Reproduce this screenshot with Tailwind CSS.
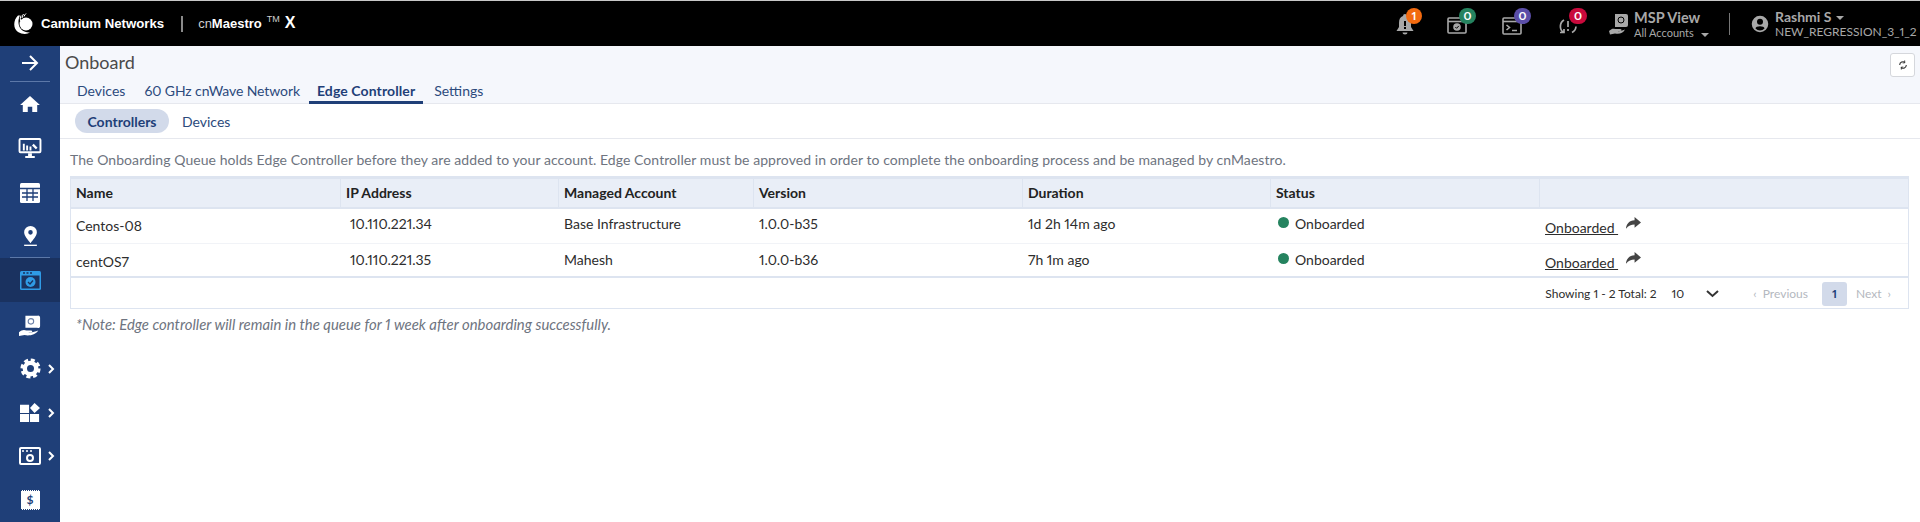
<!DOCTYPE html>
<html lang="en">
<head>
<meta charset="UTF-8" />
<title>Onboard</title>
<script src="https://cdn.jsdelivr.net/npm/@tailwindcss/browser@4"></script>
</head>
<body class="bg-white font-['Lato','Liberation_Sans',sans-serif] proportional-nums text-[#2d2d2d] h-[522px] w-[1920px] overflow-hidden">
  <!-- Top bar -->
  <header class="h-[46px] bg-black border-t border-t-[#c8c8c8] flex items-center text-white">
    <svg class="ml-[12px] w-[22px] h-[22px]" viewBox="0 0 22 22" fill="none" stroke="#fff">
      <circle cx="14" cy="11" r="6.500" fill="#fff" stroke="none" />
      <path d="M6 2.500C1 7 1 16 6 19c4 2.500 9 2.500 12 .5C12 20 7 16 6.500 10 6.300 7 7 4.500 8 2.500z" fill="#fff" stroke="none" />
      <path d="M9 2.500 A9 9 0 0 0 8.500 8 M11.500 1 A9 9 0 0 0 10 5 M14 0.500 A8 8 0 0 0 12 3.500" stroke-width="1" />
    </svg>
    <span class="ml-[7px] text-[13.200px] font-bold font-['Liberation_Sans',sans-serif]">Cambium Networks</span>
    <span class="ml-[17px] w-[2px] h-[16px] bg-[#8a8a8a]"></span>
    <span class="ml-[15px] text-[13px] font-['Liberation_Sans',sans-serif] flex items-start"><span class="text-[#d0d0d0]">cn</span><b>Maestro</b><span class="text-[9px] ml-[5px] -mt-[1px] text-[#d0d0d0]">TM</span><b class="text-[16px] ml-[5px] leading-[18px]">X</b></span>

    <div class="ml-auto flex items-center text-[#a8a8a8]">
      <div class="relative w-[20px] h-[24px]">
        <svg class="w-[20px] h-[24px]" viewBox="0 0 20 24" fill="#a8a8a8"><path d="M10 2a2 2 0 0 1 2 2c3 1 4 3.500 4 7v4l2.500 4h-17L4 15v-4c0-3.500 1-6 4-7a2 2 0 0 1 2-2z" /><path d="M7.500 20.500h5a2.500 2 0 0 1-5 0z" /><path d="M9 9h2v5H9zM9 15h2v2H9z" fill="#000" /></svg>
        <span class="absolute -top-[4px] left-[11px] w-[16px] h-[16px] rounded-full bg-[#f26a0f] text-white text-[12px] font-bold flex items-center justify-center">1</span>
      </div>
      <div class="relative ml-[32px] w-[20px] h-[24px]">
        <svg class="w-[20px] h-[24px]" viewBox="0 0 20 24" fill="none" stroke="#a8a8a8" stroke-width="1.600"><rect x="1" y="6" width="18" height="15" rx="1" /><path d="M1 9.500h18" /><circle cx="10" cy="15" r="3.800" fill="#a8a8a8" stroke="none" /><path d="M8.300 15l1.300 1.300 2.200-2.400" stroke="#000" stroke-width="1" /></svg>
        <span class="absolute -top-[4px] left-[12px] w-[17px] h-[16px] rounded-full bg-[#25835f] text-white text-[12px] font-bold flex items-center justify-center">0</span>
      </div>
      <div class="relative ml-[35px] w-[20px] h-[24px]">
        <svg class="w-[20px] h-[24px]" viewBox="0 0 20 24" fill="none" stroke="#a8a8a8" stroke-width="1.600"><rect x="1" y="6" width="18" height="16" rx="1" /><path d="M1 9.500h18" /><path d="M4.500 13l3 2.500-3 2.500M10 18.500h5" /></svg>
        <span class="absolute -top-[4px] left-[12px] w-[17px] h-[16px] rounded-full bg-[#5b4ea8] text-white text-[12px] font-bold flex items-center justify-center">0</span>
      </div>
      <div class="relative ml-[36px] w-[20px] h-[24px]">
        <svg class="w-[20px] h-[24px]" viewBox="0 0 20 24" fill="none" stroke="#a8a8a8" stroke-width="1.700"><path d="M5.500 20.500A7.500 7.500 0 0 1 6 8M2 20.500h4v-3.500M14 20.500a7.500 7.500 0 0 0 4-6" /><path d="M10 9v6M10 17v2" /></svg>
        <span class="absolute -top-[4px] left-[11px] w-[18px] h-[16px] rounded-full bg-[#c90a3c] text-white text-[12px] font-bold flex items-center justify-center">0</span>
      </div>
      <svg class="ml-[31px] w-[20px] h-[22px]" viewBox="0 0 20 22" fill="#a8a8a8"><path d="M6 1h11a2 2 0 0 1 2 2v9a2 2 0 0 1-2 2H6z" /><circle cx="12" cy="7" r="3" fill="none" stroke="#000" /><path d="M0 18c3-2.500 4-2.500 6-2h5c2 0 2 2 0 2H8c3 .5 6-.5 8-1.500-2 4-6 5-10 4l-5 1z" /></svg>
      <div class="ml-[5px] w-[95px] flex flex-col">
        <span class="text-[14.500px] font-bold leading-[17px]">MSP View</span>
        <span class="text-[11px] leading-[13px] whitespace-nowrap">All Accounts <span class="inline-block ml-[4px] w-0 h-0 border-x-[4px] border-x-transparent border-t-[4px] border-t-[#a8a8a8]"></span></span>
      </div>
      <span class="w-px h-[22px] bg-[#777]"></span>
      <svg class="ml-[21px] w-[18px] h-[18px]" viewBox="0 0 24 24" fill="#a8a8a8"><path fill-rule="evenodd" d="M12 1a11 11 0 1 1 0 22 11 11 0 0 1 0-22zm0 4a4 4 0 1 0 0 8 4 4 0 0 0 0-8zm0 10c-3 0-6 1-6 3a8 8 0 0 0 12 0c0-2-3-3-6-3z" /></svg>
      <div class="ml-[6px] w-[145px] flex flex-col">
        <span class="text-[14px] font-bold leading-[16px]">Rashmi S <span class="inline-block ml-[1px] mb-[2px] w-0 h-0 border-x-[4px] border-x-transparent border-t-[4px] border-t-[#a8a8a8]"></span></span>
        <span class="text-[12px] leading-[14px]">NEW_REGRESSION_3_1_2</span>
      </div>
    </div>
  </header>

  <div class="flex h-[476px]">
    <!-- Sidebar -->
    <nav class="w-[60px] shrink-0 bg-[#1f3f78] flex flex-col items-center text-white">
      <div class="h-[36px] w-full flex flex-col items-center justify-between pt-[7px]">
        <svg class="w-[20px] h-[20px]" viewBox="0 0 20 20" fill="none" stroke="#fff" stroke-width="2"><path d="M2 10h15M10 3l7 7-7 7" /></svg>
        <span class="w-[40px] h-px bg-[#5c78a8]"></span>
      </div>
      <div class="h-[44px] flex items-center">
        <svg class="w-[20px] h-[18px]" viewBox="0 0 22 20" fill="#fff"><path d="M11 1 L22 11h-3v8h-5.500v-6h-5v6H3v-8H0z" /></svg>
      </div>
      <div class="h-[46px] flex items-center">
        <svg class="w-[24px] h-[20px]" viewBox="0 0 24 21"><rect x="1" y="1" width="22" height="14" rx="1" fill="none" stroke="#fff" stroke-width="2" /><path d="M4.500 13V6h2v7zM8 13V8h2v5zM11.500 13V9h2v4z" fill="#fff" /><path d="M15 7l4 4" stroke="#fff" stroke-width="2.500" /><path d="M10 16h4v3h-4zM7 19h10v2H7z" fill="#fff" /></svg>
      </div>
      <div class="h-[43px] flex items-center">
        <svg class="w-[20px] h-[20px]" viewBox="0 0 20 20"><rect width="20" height="20" rx="1.500" fill="#fff" /><path d="M0 5.500h20M2 10h16M2 14h16M7 6v12M13 6v12" stroke="#1f3f78" stroke-width="1.300" /></svg>
      </div>
      <div class="h-[43px] flex items-center pt-[2px]">
        <svg class="w-[15px] h-[20px]" viewBox="0 0 16 22" fill="#fff"><path fill-rule="evenodd" d="M8 0a7 7 0 0 1 7 7c0 4-4 8-7 12C5 15 1 11 1 7a7 7 0 0 1 7-7zm0 4.500a2.500 2.500 0 1 0 0 5 2.500 2.500 0 0 0 0-5z" /><path d="M1 20.500h14V22H1z" /></svg>
      </div>
      <span class="w-[40px] h-px bg-[#5c78a8]"></span>
      <div class="h-[45px] w-full bg-[#1a3260] flex items-center justify-center">
        <svg class="w-[21px] h-[19px]" viewBox="0 0 21 19"><rect width="21" height="19" rx="1.500" fill="#2f9be6" /><rect x="1.500" y="4.500" width="18" height="13" fill="#1a3260" /><path d="M3 2h2M6.500 2h2M10 2h2" stroke="#1a3260" stroke-width="1.500" /><circle cx="10.500" cy="11" r="5" fill="#2f9be6" /><path d="M8 11l2 2 3-3.500" fill="none" stroke="#1a3260" stroke-width="1.300" /></svg>
      </div>
      <div class="h-[45px] flex items-center">
        <svg class="w-[24px] h-[22px]" viewBox="0 0 24 24" fill="#fff"><path d="M7 2h13a2 2 0 0 1 3 2v9a2 2 0 0 1-3 2H7z" /><circle cx="13" cy="8" r="3" fill="none" stroke="#6b80a8" stroke-width="1.200" /><path d="M0 20c3-3 6-3 8-2h5c2 0 2 2 0 2h-3c4 1 7-1 11-2-3 5-10 6-15 5l-6 1z" /></svg>
      </div>
      <div class="h-[44px] w-full flex items-center justify-center relative">
        <svg class="w-[21px] h-[21px]" viewBox="0 0 24 24" fill="none" stroke="#fff"><circle cx="12" cy="12" r="9.500" stroke-width="4" stroke-dasharray="4.500 2.960" /><circle cx="12" cy="12" r="6.500" stroke-width="5" /></svg>
        <svg class="absolute left-[48px] w-[7px] h-[10px]" viewBox="0 0 7 10" fill="none" stroke="#fff" stroke-width="2"><path d="M1 1l4 4-4 4" /></svg>
      </div>
      <div class="h-[44px] w-full flex items-center justify-center relative">
        <svg class="w-[20px] h-[20px]" viewBox="0 0 22 22" fill="#fff"><path d="M0 2h10v9H0zM0 12h10v9H0zM11 12h10v9H11zM16 0l6 5.500-6 5.500-5-5.500z" /></svg>
        <svg class="absolute left-[48px] w-[7px] h-[10px]" viewBox="0 0 7 10" fill="none" stroke="#fff" stroke-width="2"><path d="M1 1l4 4-4 4" /></svg>
      </div>
      <div class="h-[44px] w-full flex items-center justify-center relative">
        <svg class="w-[22px] h-[18px]" viewBox="0 0 22 18"><rect x="1" y="1" width="20" height="16" rx="1" fill="none" stroke="#fff" stroke-width="2" /><path d="M3 4h2M7 4h2M11 4h2" stroke="#fff" stroke-width="1.500" /><circle cx="11" cy="11" r="3" fill="none" stroke="#fff" stroke-width="2" /></svg>
        <svg class="absolute left-[48px] w-[7px] h-[10px]" viewBox="0 0 7 10" fill="none" stroke="#fff" stroke-width="2"><path d="M1 1l4 4-4 4" /></svg>
      </div>
      <div class="h-[44px] flex items-center">
        <div class="w-[19px] h-[20px] bg-white border-y border-dotted border-[#1f3f78] text-[#1f3f78] text-[12px] font-bold flex items-center justify-center">$</div>
      </div>
    </nav>

    <!-- Main -->
    <main class="flex-1 min-w-0">
      <div class="h-[58px] bg-[#f5f7fc] border-b border-[#e6e8ee] relative">
        <h1 class="pl-[5px] pt-[4px] text-[18px] leading-[24px] text-[#4a4a4a]">Onboard</h1>
        <div class="flex pl-[12px] mt-[4px] text-[14px] leading-[25px] text-[#2c4a7c] h-[26px]">
          <a class="px-[5px]">Devices</a>
          <a class="ml-[9px] px-[5px] tracking-[-0.100px]">60 GHz cnWave Network</a>
          <a class="ml-[4px] px-[8px] font-bold tracking-[0.100px] border-b-[3px] border-[#1f3f78] text-[#1f3f78]">Edge Controller</a>
          <a class="ml-[6px] px-[5px]">Settings</a>
        </div>
        <button class="absolute right-[5px] top-[7px] w-[25px] h-[24px] bg-white border border-[#d5d7dc] rounded-[3px] flex items-center justify-center">
          <svg class="w-[10px] h-[10px]" viewBox="0 0 12 12" fill="none" stroke="#333" stroke-width="1.300"><path d="M2 6a4 4 0 0 1 6.500-3M10 6a4 4 0 0 1-6.500 3" /><path d="M8 0.500v3h-2.500M4 11.500v-3h2.500" stroke-width="1" /></svg>
        </button>
      </div>
      <div class="h-[35px] border-b border-[#e6e8ee] flex items-center pl-[15px] text-[14px] text-[#2c4a7c]">
        <span class="w-[94px] h-[24px] rounded-full bg-[#d2daea] font-bold text-[#1f3f78] flex items-center justify-center">Controllers</span>
        <span class="ml-[13px]">Devices</span>
      </div>
      <p class="pl-[10px] pt-[12px] text-[14px] leading-[18px] tracking-[0.065px] text-[#6e7480]">The Onboarding Queue holds Edge Controller before they are added to your account. Edge Controller must be approved in order to complete the onboarding process and be managed by cnMaestro.</p>

      <!-- Table -->
      <div class="ml-[10px] mr-[11px] mt-[7px] border border-[#dde4f0] text-[14px]">
        <div class="grid grid-cols-[270px_218px_195px_269px_248px_269px_1fr] h-[32px] bg-[#e9eef7] border-t-[2px] border-b-[2px] border-[#dde4f0] items-stretch font-bold text-[#222]">
          <div class="pl-[5px] pb-[1px] flex items-center border-r border-[#dde4f0]">Name</div>
          <div class="pl-[5px] pb-[1px] flex items-center border-r border-[#dde4f0]">IP Address</div>
          <div class="pl-[5px] pb-[1px] flex items-center border-r border-[#dde4f0]">Managed Account</div>
          <div class="pl-[5px] pb-[1px] flex items-center border-r border-[#dde4f0]">Version</div>
          <div class="pl-[5px] pb-[1px] flex items-center border-r border-[#dde4f0]">Duration</div>
          <div class="pl-[5px] pb-[1px] flex items-center border-r border-[#dde4f0]">Status</div>
          <div></div>
        </div>
        <div class="grid grid-cols-[270px_218px_195px_269px_248px_269px_1fr] h-[35px] border-b border-[#f1f3f7]">
          <div class="pl-[5px] pt-[6px]">Centos-08</div>
          <div class="pl-[9px] pt-[4px]">10.110.221.34</div>
          <div class="pl-[5px] pt-[4px]">Base Infrastructure</div>
          <div class="pl-[5px] pt-[4px]">1.0.0-b35</div>
          <div class="pl-[5px] pt-[4px]">1d 2h 14m ago</div>
          <div class="pl-[7px] pt-[4px] flex items-start"><span class="w-[11px] h-[11px] mt-[4px] mr-[6px] rounded-full bg-[#25835f]"></span>Onboarded</div>
          <div class="pl-[5px] pt-[8px] flex items-start"><a class="underline decoration-1 whitespace-pre">Onboarded </a>
            <svg class="ml-[8px] w-[15px] h-[13px]" viewBox="0 0 14 12" fill="#444"><path d="M8 0l6 5-6 5V7C5 7 2 8 0 11c0-4 3-8 8-8z" /></svg></div>
        </div>
        <div class="grid grid-cols-[270px_218px_195px_269px_248px_269px_1fr] h-[34px] border-b-[2px] border-[#dde4f0]">
          <div class="pl-[5px] pt-[7px]">centOS7</div>
          <div class="pl-[9px] pt-[5px]">10.110.221.35</div>
          <div class="pl-[5px] pt-[5px]">Mahesh</div>
          <div class="pl-[5px] pt-[5px]">1.0.0-b36</div>
          <div class="pl-[5px] pt-[5px]">7h 1m ago</div>
          <div class="pl-[7px] pt-[5px] flex items-start"><span class="w-[11px] h-[11px] mt-[4px] mr-[6px] rounded-full bg-[#25835f]"></span>Onboarded</div>
          <div class="pl-[5px] pt-[8px] flex items-start"><a class="underline decoration-1 whitespace-pre">Onboarded </a>
            <svg class="ml-[8px] w-[15px] h-[13px]" viewBox="0 0 14 12" fill="#444"><path d="M8 0l6 5-6 5V7C5 7 2 8 0 11c0-4 3-8 8-8z" /></svg></div>
        </div>
        <div class="h-[30px] pt-[1px] flex items-center justify-end pr-[17px] text-[12px]">
          <span>Showing 1 - 2 Total: 2</span>
          <span class="ml-[15px]">10</span>
          <svg class="ml-[22px] w-[13px] h-[8px]" viewBox="0 0 13 8" fill="none" stroke="#333" stroke-width="2"><path d="M1 1l5.500 5 5.500-5" /></svg>
          <span class="ml-[34px] text-[#b4b8c0]">‹&nbsp; Previous</span>
          <span class="ml-[14px] w-[25px] h-[24px] rounded-[3px] bg-[#d2daea] font-bold text-[#1f3f78] flex items-center justify-center">1</span>
          <span class="ml-[9px] text-[#b4b8c0]">Next &nbsp;›</span>
        </div>
      </div>
      <p class="pl-[16px] pt-[6px] text-[14.900px] leading-[18px] italic text-[#6e7480]">*Note: Edge controller will remain in the queue for 1 week after onboarding successfully.</p>
    </main>
  </div>
</body>
</html>
